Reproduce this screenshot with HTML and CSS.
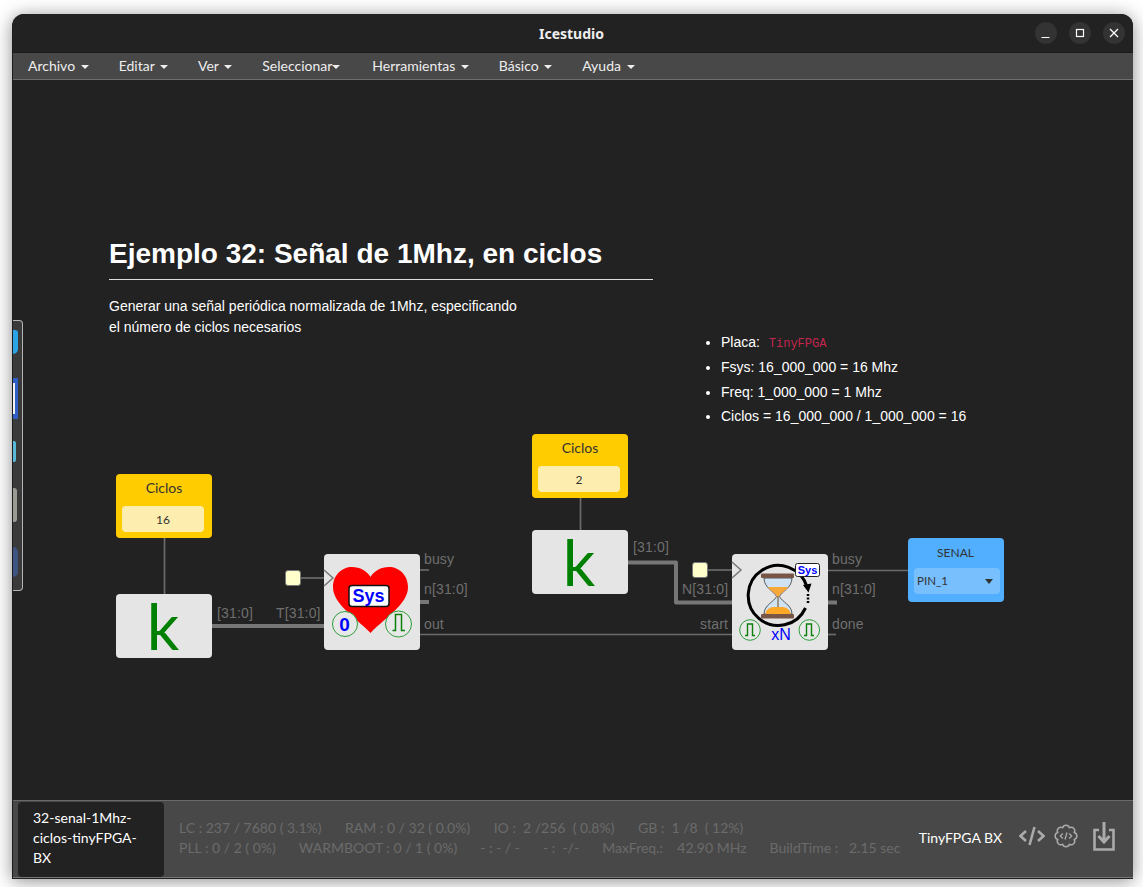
FILE: index.html
```html
<!DOCTYPE html>
<html lang="es">
<head>
  <meta charset="UTF-8" />
  <title>Icestudio</title>
  <link rel="stylesheet" href="styles.css">
</head>
<body>
  <div class="window">
    <header class="titlebar">
      <span class="title">Icestudio</span>
      <div class="win-buttons">
        <button class="win-btn"><svg width="12" height="12" viewBox="0 0 12 12"><path d="M1.5 10.5h8" stroke="#fff" stroke-width="1.2"/></svg></button>
        <button class="win-btn"><svg width="12" height="12" viewBox="0 0 12 12"><rect x="2.5" y="2.5" width="7" height="7" fill="none" stroke="#fff" stroke-width="1.2"/></svg></button>
        <button class="win-btn"><svg width="12" height="12" viewBox="0 0 12 12"><path d="M2 2l8 8M10 2l-8 8" stroke="#fff" stroke-width="1.3"/></svg></button>
      </div>
    </header>

    <nav class="menu">
      <a class="menu-item">Archivo <i class="caret"></i></a>
      <a class="menu-item">Editar <i class="caret"></i></a>
      <a class="menu-item">Ver <i class="caret"></i></a>
      <a class="menu-item tight">Seleccionar<i class="caret"></i></a>
      <a class="menu-item">Herramientas <i class="caret"></i></a>
      <a class="menu-item">Básico <i class="caret"></i></a>
      <a class="menu-item">Ayuda <i class="caret"></i></a>
    </nav>

    <main class="canvas">
      <svg class="wires" width="1120" height="720" viewBox="13 80 1120 720">
        <g fill="none" stroke="#6a6a6a" stroke-width="1.700">
          <path d="M164.500 538V594"/>
          <path d="M580.500 498V530"/>
          <path d="M301 578H324"/>
          <path d="M708 570H732"/>
          <path d="M420 570H429"/>
          <path d="M420 634.500H732"/>
          <path d="M828 570.500H908"/>
          <path d="M828 634.500H836"/>
        </g>
        <g fill="none" stroke="#777" stroke-width="4">
          <path d="M212 626H324"/>
          <path d="M420 602H429"/>
          <path d="M628 562.500H676V602.500H732" stroke-linejoin="round"/>
          <path d="M828 602.500H837"/>
        </g>
        <g class="port-label">
          <text x="424" y="564">busy</text>
          <text x="424" y="594">n[31:0]</text>
          <text x="424" y="629">out</text>
          <text x="217" y="618">[31:0]</text>
          <text x="276" y="618">T[31:0]</text>
          <text x="633" y="552">[31:0]</text>
          <text x="682" y="594">N[31:0]</text>
          <text x="700" y="629">start</text>
          <text x="832" y="564">busy</text>
          <text x="832" y="594">n[31:0]</text>
          <text x="832" y="629">done</text>
        </g>
      </svg>

      <section class="note heading">
        <h1>Ejemplo 32: Señal de 1Mhz, en ciclos</h1>
        <p>Generar una señal periódica normalizada de 1Mhz, especificando<br>el número de ciclos necesarios</p>
      </section>

      <ul class="note specs">
        <li>Placa: <code>TinyFPGA</code></li>
        <li>Fsys: 16_000_000 = 16 Mhz</li>
        <li>Freq: 1_000_000 = 1 Mhz</li>
        <li>Ciclos = 16_000_000 / 1_000_000 = 16</li>
      </ul>

      <div class="node const const-a">
        <span class="const-name">Ciclos</span>
        <span class="const-value">16</span>
      </div>
      <div class="node const const-b">
        <span class="const-name">Ciclos</span>
        <span class="const-value">2</span>
      </div>
      <div class="node k-block k-a">k</div>
      <div class="node k-block k-b">k</div>

      <div class="clock clock-a"></div>
      <div class="clock clock-b"></div>

      <div class="node block timer">
        <svg width="96" height="96" viewBox="0 0 96 96">
          <path d="M0 16L9 24L0 32" fill="none" stroke="#777" stroke-width="1.500"/>
          <path d="M46.500 79C30 62 9 50 9 33C9 21 18 13 28 13C36 13 43 17 46.500 23C50 17 57 13 65 13C75 13 84 21 84 33C84 50 63 62 46.500 79Z" fill="#f00"/>
          <rect x="25" y="31.500" width="40" height="21" rx="3" fill="#fff" stroke="#111" stroke-width="1.500"/>
          <text class="sys-big" x="44.500" y="48">Sys</text>
          <circle cx="21" cy="70" r="12.500" fill="#e8e8e8" stroke="#2e9e3a"/>
          <text class="zero" x="20.500" y="76.500">0</text>
          <circle cx="74.500" cy="70" r="13" fill="#e8e8e8" stroke="#2e9e3a"/>
          <path d="M68.500 76.500H71.500V60.500H77.500V76.500H81" fill="none" stroke="#0a800a" stroke-width="1.500"/>
        </svg>
      </div>

      <div class="node block delay">
        <svg width="96" height="96" viewBox="0 0 96 96">
          <path d="M0 8L9 16L0 24" fill="none" stroke="#777" stroke-width="1.500"/>
          <path d="M73.500 54A30 30 0 1 1 75 33" fill="none" stroke="#000" stroke-width="3"/>
          <path d="M71 31L79.500 29.500L76.500 38.500Z" fill="#000"/>
          <path d="M76 40V50" fill="none" stroke="#000" stroke-width="2.500" stroke-dasharray="2 1.500"/>
          <path d="M32 24C32 34 42 37 44.500 42.500C42 48 32 51 32 60H60C60 51 50 48 47.500 42.500C50 37 60 34 60 24Z" fill="#cfe3f3" stroke="#333" stroke-width=".8"/>
          <path d="M36 33H56C54 37 48 39 47 43H45C44 39 38 37 36 33Z" fill="#f7a83a"/>
          <path d="M33.500 60C33.500 56 37 53.500 41 53H51C55 53.500 58.500 56 58.500 60Z" fill="#ffa726"/>
          <path d="M46 42V53" stroke="#8d7b62" stroke-width="1.500"/>
          <rect x="29" y="19.500" width="33" height="4.500" rx="1" fill="#795548"/>
          <rect x="29" y="60" width="33" height="4.500" rx="1" fill="#795548"/>
          <rect x="63.500" y="9.500" width="24" height="13" rx="2" fill="#fff" stroke="#222"/>
          <text class="sys-small" x="75.500" y="20">Sys</text>
          <circle cx="18" cy="76" r="10.300" fill="#e8e8e8" stroke="#2e9e3a"/>
          <path d="M13 81.500H15.500V70H20.500V81.500H23" fill="none" stroke="#0a800a" stroke-width="1.400"/>
          <circle cx="77.300" cy="76" r="10.300" fill="#e8e8e8" stroke="#2e9e3a"/>
          <path d="M72 81.500H74.500V70H79.500V81.500H82" fill="none" stroke="#0a800a" stroke-width="1.400"/>
          <text class="times-n" x="49" y="86">xN</text>
        </svg>
      </div>

      <div class="node pin">
        <span class="pin-name">SENAL</span>
        <div class="pin-select"><span>PIN_1</span><i class="pin-arrow"></i></div>
      </div>
    </main>

    <footer class="statusbar">
      <div class="file-tab">32-senal-1Mhz-ciclos-tinyFPGA-BX</div>
      <div class="stats">
        <div class="stats-row"><span>LC : 237 / 7680 ( 3.1%)</span><span>RAM : 0 / 32 ( 0.0%)</span><span>IO :&nbsp; 2 /256&nbsp; ( 0.8%)</span><span>GB :&nbsp; 1 /8&nbsp; ( 12%)</span></div>
        <div class="stats-row"><span>PLL : 0 / 2 ( 0%)</span><span>WARMBOOT : 0 / 1 ( 0%)</span><span>- : - / -</span><span>- :&nbsp; -/-</span><span>MaxFreq.:&nbsp;&nbsp;&nbsp; 42.90 MHz</span><span>BuildTime :&nbsp;&nbsp; 2.15 sec</span></div>
      </div>
      <div class="board">TinyFPGA BX</div>
      <div class="tools">
        <svg class="tool" width="26" height="24" viewBox="0 0 26 24"><path d="M7 7L1.500 12L7 17M19 7L24.500 12L19 17M15.500 3L10.500 21" fill="none" stroke="#aaa" stroke-width="2.600"/></svg>
        <svg class="tool" width="24" height="24" viewBox="0 0 24 24"><path d="M20.300 8.560A3.600 3.600 0 0 1 20.300 15.440A3.600 3.600 0 0 1 15.440 20.300A3.600 3.600 0 0 1 8.560 20.300A3.600 3.600 0 0 1 3.700 15.440A3.600 3.600 0 0 1 3.700 8.560A3.600 3.600 0 0 1 8.560 3.700A3.600 3.600 0 0 1 15.440 3.700A3.600 3.600 0 0 1 20.300 8.560Z" fill="none" stroke="#aaa" stroke-width="1.500"/><path d="M8.800 9.500L6.300 12L8.800 14.500M15.200 9.500L17.700 12L15.200 14.500M13 8.500L11 15.500" fill="none" stroke="#aaa" stroke-width="1.300"/></svg>
        <svg class="tool tool-save" width="22" height="30" viewBox="0 0 22 30"><path d="M6 8H1.500V27.500H20.500V8H16" fill="none" stroke="#aaa" stroke-width="2.600"/><path d="M11 0V19M5.500 14L11 20L16.500 14" fill="none" stroke="#aaa" stroke-width="3"/></svg>
      </div>
    </footer>
  </div>

  <div class="dock">
    <i class="dock-icon dock-blue"></i>
    <i class="dock-icon dock-active"></i>
    <i class="dock-icon dock-cyan"></i>
    <i class="dock-icon dock-grey"></i>
    <i class="dock-icon dock-navy"></i>
  </div>
</body>
</html>
```

FILE: styles.css
```css
* {
  box-sizing: border-box;
}

html, body {
  height: 100%;
}

body {
  margin: 0;
  padding: 14px 10px 7px 12px;
  background-color: #fff;
  overflow: hidden;
  font-family: "Lato", sans-serif;
}

.window {
  height: 865px;
  padding-bottom: 1px;
  display: flex;
  flex-direction: column;
  background: #222;
  border-left: 1px solid #1c1c1c;
  border-radius: 12px 12px 0 0;
  box-shadow: 0 2px 18px rgba(0, 0, 0, 0.45);
  overflow: hidden;
}

.titlebar {
  height: 38px;
  flex: none;
  display: flex;
  align-items: center;
  justify-content: center;
  position: relative;
  background: #222;
}

.title {
  color: #eee;
  font-family: "Noto Sans", sans-serif;
  font-weight: 700;
  font-size: 14px;
  margin-left: -3px;
}

.win-buttons {
  position: absolute;
  right: 8px;
  top: 8px;
  display: flex;
  gap: 12px;
}

.win-btn {
  width: 22px;
  height: 22px;
  padding: 0;
  border: none;
  border-radius: 50%;
  background: #333;
  display: flex;
  align-items: center;
  justify-content: center;
}

.menu {
  height: 28px;
  flex: none;
  display: flex;
  align-items: center;
  padding-bottom: 2px;
  background: #484848;
  border-top: 1px solid #1a1a1a;
  border-bottom: 1px solid #6e6e6e;
}

.menu-item {
  padding: 0 15px;
  color: #eee;
  font-size: 14px;
  white-space: nowrap;
}

.caret {
  display: inline-block;
  margin-left: 2px;
  vertical-align: middle;
  border-top: 4px solid #eee;
  border-left: 4px solid transparent;
  border-right: 4px solid transparent;
}

.tight .caret {
  margin-left: 0;
}

.tight {
  padding-right: 17px;
}

.canvas {
  flex: 1;
  position: relative;
  background: #222;
  overflow: hidden;
}

.wires {
  position: absolute;
  left: 0;
  top: 0;
}

.port-label text {
  fill: #6f6f6f;
  font-family: "Liberation Sans", sans-serif;
  font-size: 14px;
  letter-spacing: 0.15px;
}

.note {
  position: absolute;
  color: #fff;
  font-family: "Liberation Sans", Arial, sans-serif;
  font-size: 14px;
}

.heading {
  left: 96px;
  top: 157px;
  width: 544px;
}

h1 {
  margin: 0 0 16px;
  padding-bottom: 8px;
  border-bottom: 1px solid #ddd;
  font-size: 28px;
  line-height: 34px;
}

.heading p {
  margin: 0;
  line-height: 21px;
}

.specs {
  left: 668px;
  top: 250.300px;
  margin: 0;
  padding-left: 40px;
}

.specs li {
  height: 24.700px;
  line-height: 24px;
}

code {
  margin-left: 5px;
  color: #c7254e;
  font-family: "Liberation Mono", monospace;
  font-size: 12px;
}

.node {
  position: absolute;
  width: 96px;
  border-radius: 4px;
}

.const {
  height: 64px;
  padding: 6px 8px 6px 6px;
  display: flex;
  flex-direction: column;
  align-items: center;
  background: #ffcc00;
}

.const-name {
  height: 26px;
  padding-left: 2px;
  line-height: 15px;
  color: #333;
  font-size: 14px;
}

.const-value {
  width: 100%;
  height: 26px;
  line-height: 27px;
  text-align: center;
  background: #fdeeb0;
  border-radius: 4px;
  color: #333;
  font-family: "Lato", sans-serif;
  font-size: 12px;
}

.const-a { left: 103px; top: 394px; }
.const-b { left: 519px; top: 354px; }

.k-block {
  height: 64px;
  padding-right: 2px;
  background: #e5e5e5;
  color: #008000;
  font-size: 64px;
  line-height: 63px;
  text-align: center;
}

.k-a { left: 103px; top: 514px; }
.k-b { left: 519px; top: 450px; }

.clock {
  position: absolute;
  width: 16px;
  height: 16px;
  background: #ffffcc;
  border: 1px solid #777;
  border-radius: 3px;
}

.clock-a { left: 272px; top: 490px; }
.clock-b { left: 679px; top: 482px; }

.block {
  height: 96px;
  background: #e5e5e5;
}

.block svg {
  display: block;
  overflow: visible;
}

.timer { left: 311px; top: 474px; }
.delay { left: 719px; top: 474px; }

.sys-big, .zero, .sys-small {
  fill: #0000ff;
  font-family: "Liberation Sans", sans-serif;
  font-weight: 700;
  text-anchor: middle;
}

.sys-big { font-size: 18px; }
.zero { font-size: 19px; }
.sys-small { font-size: 11px; }

.times-n {
  fill: #0000ff;
  font-family: "Liberation Sans", sans-serif;
  font-size: 16px;
  text-anchor: middle;
}

.pin {
  left: 895px;
  top: 458px;
  height: 64px;
  padding: 4px 4px 8px 6px;
  display: flex;
  flex-direction: column;
  background: #52aeff;
}

.pin-name {
  height: 26px;
  padding-right: 3px;
  line-height: 22px;
  text-align: center;
  color: #333;
  font-size: 12px;
}

.pin-select {
  height: 26px;
  padding: 0 7px 2px 3px;
  display: flex;
  align-items: center;
  justify-content: space-between;
  background: #77bffd;
  border-radius: 4px;
  color: #333;
  font-size: 11.500px;
}

.pin-arrow {
  margin-top: 3px;
  border-top: 5px solid #333;
  border-left: 4px solid transparent;
  border-right: 4px solid transparent;
}

.statusbar {
  height: 78px;
  flex: none;
  display: flex;
  align-items: center;
  padding: 1px 0 1px 5px;
  background: #484848;
  border-top: 1px solid #6a6a6a;
  border-bottom: 1px solid #777;
}

.file-tab {
  width: 146px;
  height: 75px;
  flex: none;
  padding: 6px 15px 0;
  background: #222;
  border-radius: 4px;
  color: #fff;
  font-size: 14px;
  line-height: 20px;
}

.stats {
  flex: 1;
  padding-left: 15px;
  margin-top: -2px;
  color: #6b6b6b;
  font-size: 14px;
  line-height: 20px;
}

.stats-row {
  display: flex;
  gap: 23px;
  white-space: nowrap;
}

.stats-row:first-child {
  gap: 23.500px;
}

.board {
  color: #fff;
  font-size: 14px;
  margin: 0 17px 4px 0;
}

.tools {
  display: flex;
  align-items: center;
  gap: 9px;
  padding: 0 18px 6px 0;
}

.tool {
  display: block;
}

.tool-save {
  margin: 2px 0 0 6px;
}

.dock {
  position: absolute;
  left: 13px;
  top: 320px;
  width: 10px;
  height: 271px;
  background: #3a3a3a;
  border: 1px solid #b5b5b5;
  border-left: none;
  border-radius: 0 4px 4px 0;
}

.dock-icon {
  position: absolute;
  left: 0;
  display: block;
}

.dock-blue {
  top: 9px;
  width: 5px;
  height: 24px;
  background: #2ba4e6;
  border-radius: 0 3px 5px 0;
}

.dock-active {
  top: 57px;
  width: 5px;
  height: 41px;
  background: linear-gradient(90deg, #f2f2f2 40%, #2f5fc4 40%);
  border-top: 5px solid #2f5fc4;
  border-bottom: 5px solid #2f5fc4;
}

.dock-cyan {
  top: 120px;
  width: 3px;
  height: 21px;
  background: #58b9d8;
  border-radius: 0 2px 2px 0;
}

.dock-grey {
  top: 167px;
  width: 4px;
  height: 34px;
  background: #9b9b93;
  border-radius: 0 3px 3px 0;
}

.dock-navy {
  top: 226px;
  width: 5px;
  height: 30px;
  background: #3d5580;
  border-radius: 0 12px 12px 0;
}
```
